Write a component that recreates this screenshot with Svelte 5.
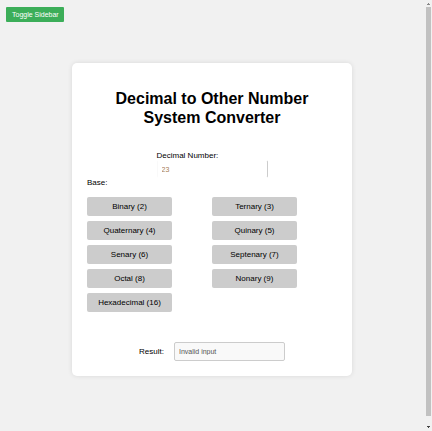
<script>
  const bases = [
    ['Binary', 2], ['Ternary', 3], ['Quaternary', 4], ['Quinary', 5], ['Senary', 6],
    ['Septenary', 7], ['Octal', 8], ['Nonary', 9], ['Hexadecimal', 16]
  ];
  let decimal = $state('23');
  let result = $state('Invalid input');

  function convert(base) {
    const n = Number(decimal);
    result = decimal.trim() && Number.isInteger(n) ? n.toString(base).toUpperCase() : 'Invalid input';
  }
</script>

<div class="window">
  <div class="page">
    <button class="toggle" type="button">Toggle Sidebar</button>
    <main class="card">
      <h1>Decimal to Other Number System Converter</h1>
      <div class="field">
        <label for="decimal">Decimal Number:</label>
        <input id="decimal" type="text" bind:value={decimal} />
      </div>
      <div class="base" id="base-label">Base:</div>
      <div class="grid" role="group" aria-labelledby="base-label">
        {#each bases as [name, base]}
          <button type="button" onclick={() => convert(base)}>{name} ({base})</button>
        {/each}
      </div>
      <div class="result">
        <label for="result">Result:</label>
        <input id="result" type="text" readonly value={result} />
      </div>
    </main>
  </div>
  <div class="scroll" aria-hidden="true">
    <svg width="7" height="7" viewBox="0 0 7 7"><path d="M3 3h1v1h1v1H2V4h1z" fill="#888" /></svg>
    <div class="thumb"></div>
    <svg class="down" width="7" height="15" viewBox="0 0 7 15"><path d="M2 10h3v1H4v1H3v-1H2z" fill="#444" /></svg>
  </div>
</div>

<style>
  :global(body) {
    margin: 0;
    background: #f1f1f1;
  }
  .window {
    display: flex;
    min-height: 100vh;
    font: 8px/9px "Liberation Sans", Arial, sans-serif;
    color: #000;
  }
  .page {
    flex: 1;
    display: flex;
    flex-direction: column;
    padding: 7px 7px 7px 6px;
    box-sizing: border-box;
  }
  button, input {
    font: inherit;
    box-sizing: border-box;
    margin: 0;
  }
  .toggle {
    align-self: flex-start;
    height: 15px;
    padding: 0 5px 0 6px;
    border: 0;
    border-radius: 1px;
    background: #3cae59;
    color: #fff;
    font-size: 7px;
  }
  .card {
    width: 68%;
    max-width: 280px;
    box-sizing: border-box;
    margin: 41px auto 0;
    padding: 26px 15px 15px;
    border-radius: 5px;
    background: #fff;
    box-shadow: 0 0 5px rgba(0, 0, 0, 0.1);
  }
  h1 {
    margin: 0 0 24px;
    font-size: 16px;
    line-height: 19px;
    text-align: center;
  }
  .field {
    display: flex;
    flex-direction: column;
    width: 111px;
    margin: 0 auto;
  }
  input {
    width: 111px;
    height: 19px;
    padding: 0 4px;
    border: 1px solid #ccc;
    border-radius: 2px;
    background: #fff;
    color: #555;
    font-size: 7px;
    outline: none;
  }
  .field input {
    height: 18px;
    border-color: #fff #ccc #fff #f9f9f9;
    color: #a67c52;
  }
  .grid {
    display: grid;
    grid-template-columns: 1fr 1fr;
    row-gap: 5px;
    margin-top: 10px;
  }
  .grid button {
    width: 85px;
    height: 19px;
    padding: 0;
    border: 0;
    border-radius: 2px;
    background: #ccc;
    color: #000;
  }
  .result {
    display: flex;
    justify-content: center;
    align-items: center;
    gap: 10px;
    margin-top: 30px;
  }
  .result input {
    background: #f9f9f9;
  }
  .scroll {
    display: flex;
    flex-direction: column;
    width: 7px;
  }
  .scroll svg {
    flex: none;
  }
  .thumb {
    flex: 1;
    margin: 0 1px;
    background: #c1c1c1;
  }
</style>
